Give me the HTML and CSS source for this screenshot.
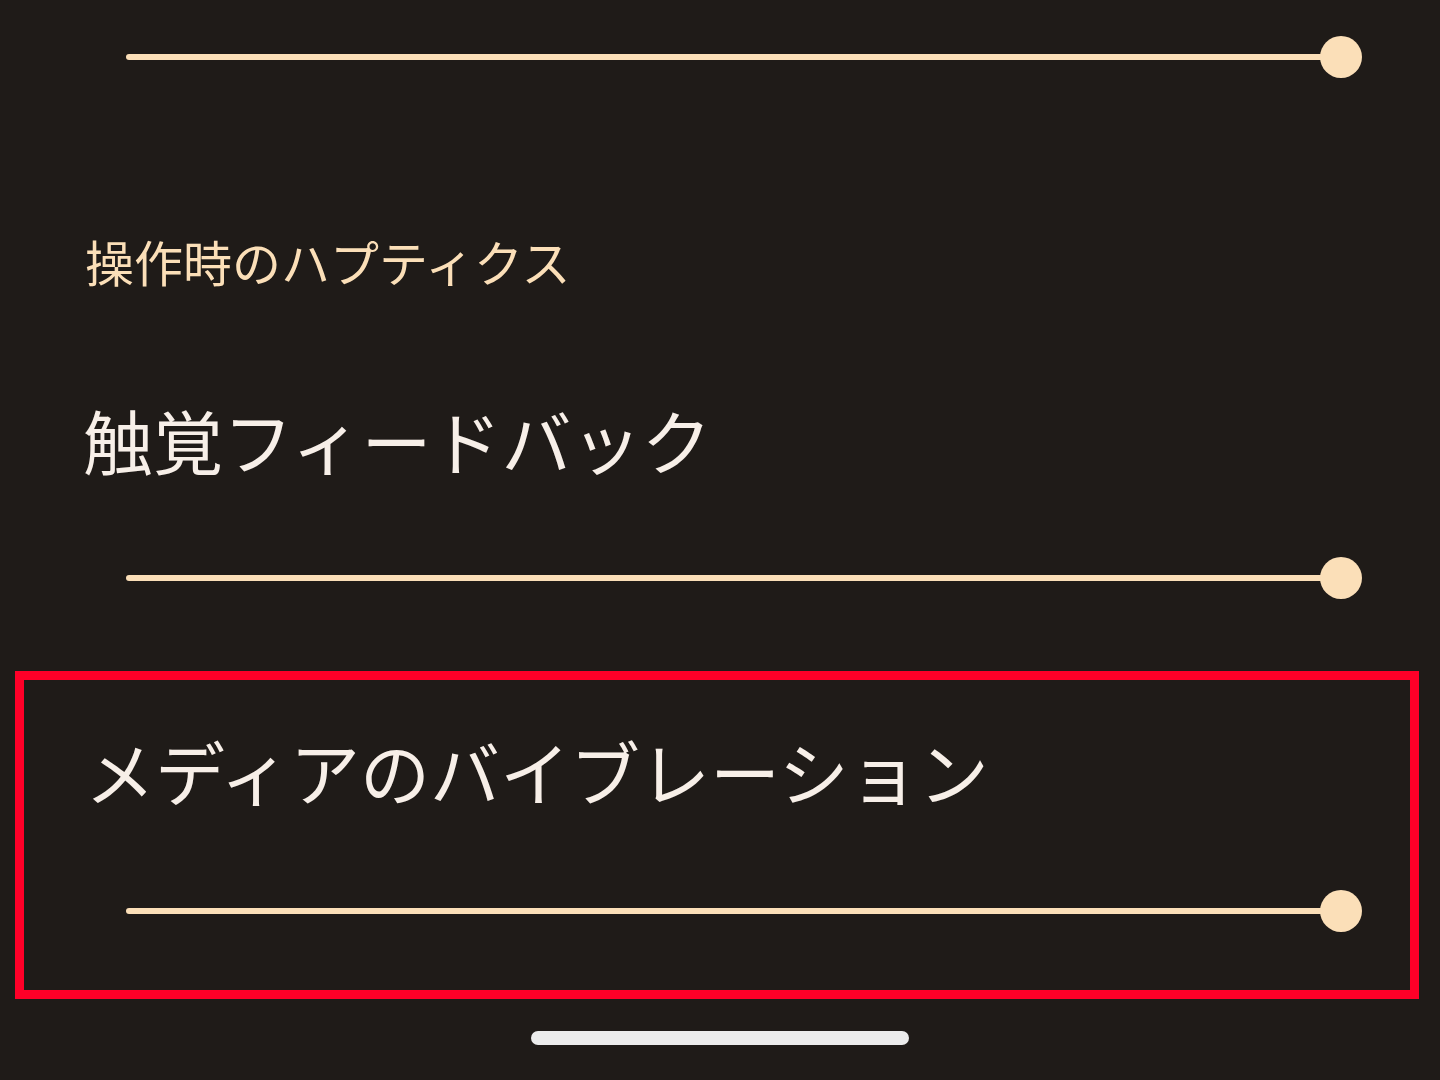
FILE: index.html
```html
<!DOCTYPE html>
<html lang="ja">
<head>
<meta charset="utf-8">
<link rel="stylesheet" href="styles.css">
</head>
<body>
<div class="screen">
  <div class="slider slider-top">
    <div class="track"></div>
    <div class="thumb"></div>
  </div>
  <div class="label">操作時のハプティクス</div>
  <div class="title title-touch">触覚フィードバック</div>
  <div class="slider slider-mid">
    <div class="track"></div>
    <div class="thumb"></div>
  </div>
  <div class="highlight">
    <div class="title">メディアのバイブレーション</div>
    <div class="slider slider-box">
      <div class="track"></div>
      <div class="thumb"></div>
    </div>
  </div>
  <div class="home"><div class="home-bar"></div></div>
</div>
</body>
</html>
```

FILE: styles.css
```css
html, body {
  margin: 0;
  padding: 0;
  background: #1f1b18;
}
.screen {
  width: 1440px;
  height: 1080px;
  display: flex;
  flex-direction: column;
  font-family: "Noto Sans CJK JP", "Noto Sans", sans-serif;
  overflow: hidden;
}
.slider {
  display: flex;
  align-items: center;
  height: 60px;
  padding: 0 78px 0 126px;
}
.slider-top {
  height: 114px;
}
.track {
  flex: 1;
  height: 6px;
  border-radius: 3px;
  background: #fbdfb8;
  margin-right: -21px;
}
.thumb {
  width: 42px;
  height: 42px;
  border-radius: 50%;
  background: #fbdfb8;
  flex: none;
}
.label {
  margin-top: 115px;
  padding-left: 85px;
  font-size: 49px;
  line-height: 64px;
  color: #fbdfb8;
}
.title {
  font-size: 70px;
  line-height: 90px;
  color: #f7efe8;
  white-space: nowrap;
}
.title-touch {
  margin-top: 102px;
  padding-left: 83px;
}
.slider-mid {
  margin-top: 63px;
}
.highlight {
  margin: 63px 0 0 15px;
  width: 1404px;
  height: 328px;
  box-sizing: border-box;
  border: 9px solid #ff0028;
  padding-top: 46px;
  display: flex;
  flex-direction: column;
}
.highlight .title {
  padding-left: 61px;
}
.slider-box {
  margin-top: 65px;
  padding: 0 48px 0 102px;
}
.home {
  margin-top: 32px;
  display: flex;
  justify-content: center;
}
.home-bar {
  width: 378px;
  height: 14px;
  border-radius: 7px;
  background: #ececec;
}
```
